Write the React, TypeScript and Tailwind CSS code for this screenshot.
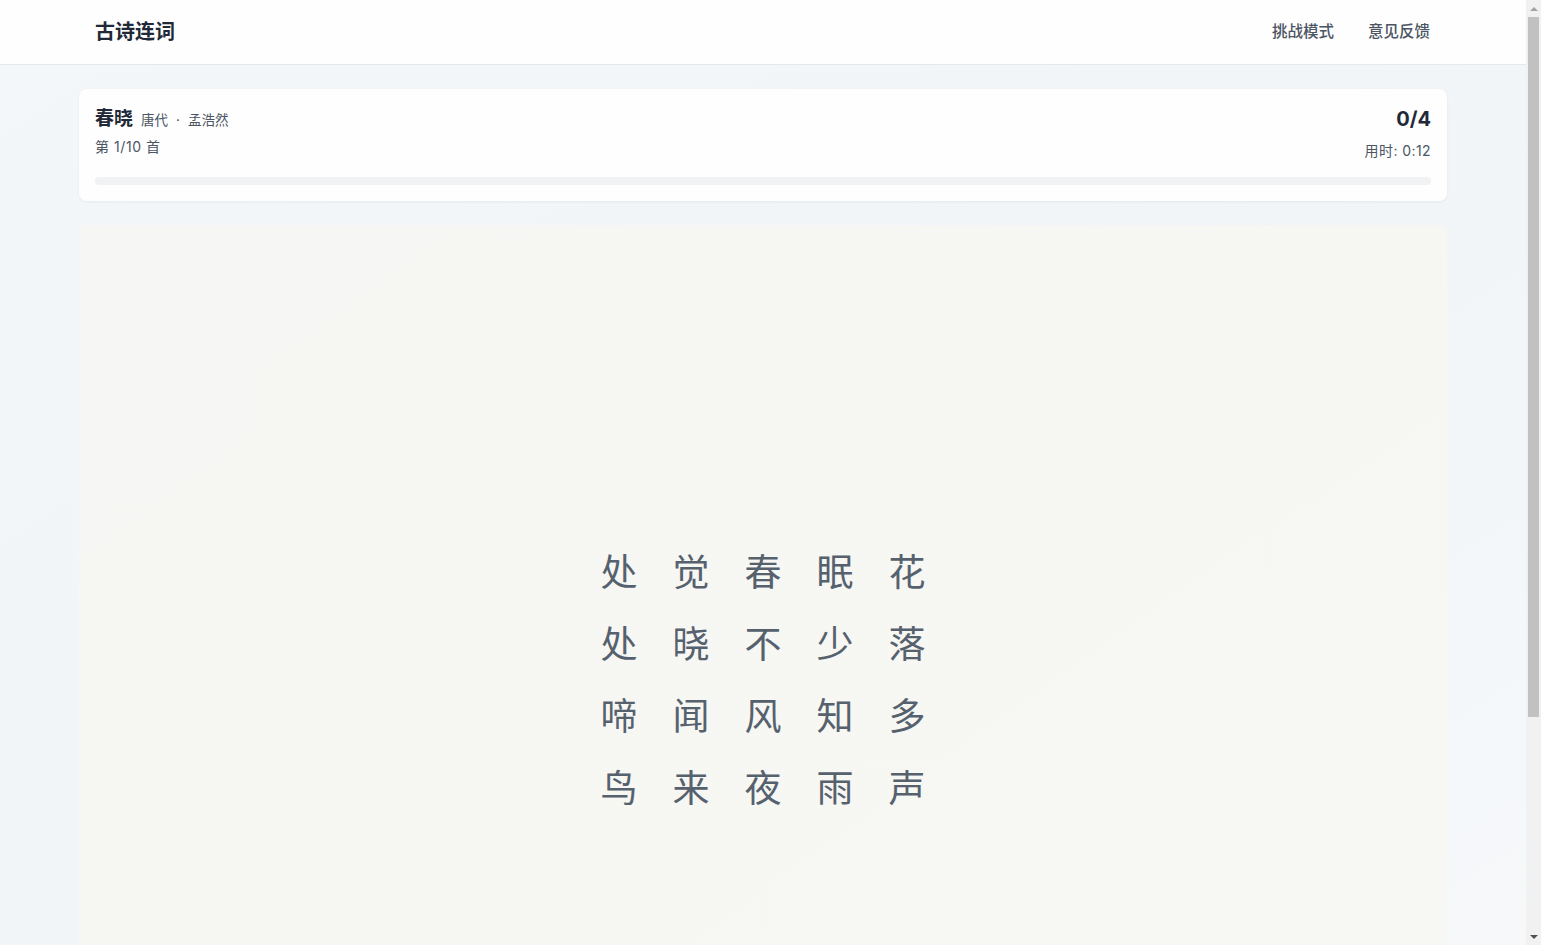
const POEM = [
  ["处", "觉", "春", "眠", "花"],
  ["处", "晓", "不", "少", "落"],
  ["啼", "闻", "风", "知", "多"],
  ["鸟", "来", "夜", "雨", "声"],
];

const FONT = "font-['Inter','Noto_Sans_CJK_SC',sans-serif]";

// the page shows a classic (non-overlay) scrollbar on the right edge
function FakeScrollbar() {
  return (
    <div className="flex w-[15px] shrink-0 flex-col bg-[#f1f1f1]">
      <div className="flex h-[17px] items-center justify-center">
        <div className="h-0 w-0 border-x-[4px] border-b-[4px] border-x-transparent border-b-[#a3a3a3]" />
      </div>
      <div className="mx-[2px] h-[700px] bg-[#c1c1c1]" />
      <div className="flex-1" />
      <div className="flex h-[17px] items-center justify-center">
        <div className="h-0 w-0 border-x-[4px] border-t-[4px] border-x-transparent border-t-[#505050]" />
      </div>
    </div>
  );
}

export default function App() {
  return (
    <div className={`flex h-screen overflow-hidden text-[#1f2937] ${FONT}`}>
      <div className="flex-1 overflow-hidden bg-gradient-to-br from-[#f4f7fa] via-[#f1f5f8] to-[#f6f8fa]">
        <header className="border-b border-[#e5e8ec] bg-white/90">
          <div className="mx-auto flex h-16 max-w-[1400px] items-center justify-between px-8">
            <h1 className="text-xl font-bold text-[#1f2937]">古诗连词</h1>
            <nav className="flex items-center gap-[34px] text-[15.5px] font-medium text-[#4b5563]">
              <span>挑战模式</span>
              <span className="mr-[1px]">意见反馈</span>
            </nav>
          </div>
        </header>

        <main className="mx-auto max-w-[1400px] px-4 pt-6 pb-7">
          {/* poem info + progress */}
          <div className="rounded-lg bg-white/90 p-4 shadow-[0_1px_3px_rgba(15,23,42,0.06)]">
            <div className="flex items-start justify-between">
              <div>
                <div className="flex items-baseline gap-2">
                  <span className="text-[19px] leading-7 font-bold text-[#1f2937]">春晓</span>
                  <span className="text-[13.5px] text-[#4b5563]">
                    唐代<span className="mx-[8px]">·</span>孟浩然
                  </span>
                </div>
                <p className="mt-1 text-sm tracking-[0.04em] text-[#4b5563]">第 1/10 首</p>
              </div>
              <div className="text-right">
                <p className="text-xl leading-7 font-bold text-[#1f2937]">0/4</p>
                <p className="mt-2 text-sm tracking-[0.03em] text-[#4b5563]">用时: 0:12</p>
              </div>
            </div>
            <div className="mt-4 h-2 w-full rounded-full bg-[#f1f2f3]" />
          </div>

          {/* character board */}
          <div className="mt-6 flex min-h-[976px] flex-col rounded-lg bg-gradient-to-br from-[#f6f6f4] to-[#f7f7f3]">
            <div className="flex h-[912px] items-center justify-center">
              <div className="grid grid-cols-5">
                {POEM.flat().map((ch, i) => (
                  <div
                    key={i}
                    className="flex h-[72px] w-[72px] items-center justify-center text-[37px] text-[#56616e]"
                  >
                    {ch}
                  </div>
                ))}
              </div>
            </div>
          </div>
        </main>
      </div>
      <FakeScrollbar />
    </div>
  );
}
